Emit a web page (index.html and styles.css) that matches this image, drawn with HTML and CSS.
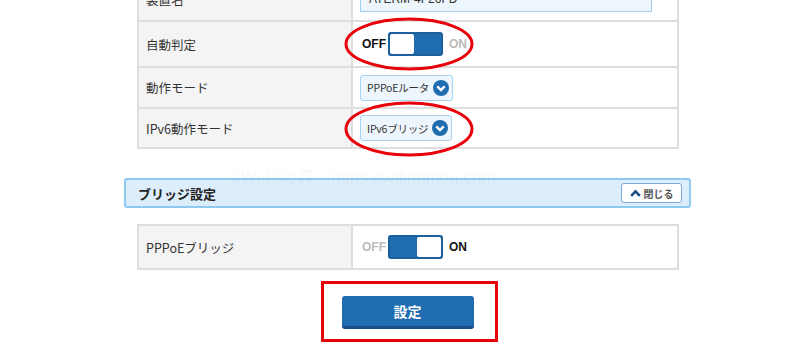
FILE: index.html
```html
<!DOCTYPE html>
<html lang="ja">
<head>
  <meta charset="UTF-8" />
  <title>ブリッジ設定</title>
  <link rel="stylesheet" href="styles.css">
</head>
<body>
<div class="page">

  <div class="settings top-table">
    <div class="row first">
      <div class="label">装置名</div>
      <div class="value"><div class="text-input">ATERM-4F26FD</div></div>
    </div>
    <div class="row tall">
      <div class="label">自動判定</div>
      <div class="value">
        <span class="sw-text on-side">OFF</span>
        <span class="switch is-off"><span class="knob"></span></span>
        <span class="sw-text dim">ON</span>
      </div>
    </div>
    <div class="row">
      <div class="label">動作モード</div>
      <div class="value">
        <div class="select">PPPoEルータ
          <svg class="chev" width="16" height="16" viewBox="0 0 16 16"><circle cx="8" cy="8" r="8" fill="#1f6cb0"/><path d="M4.3 6.3 L8 10 L11.7 6.3" fill="none" stroke="#fff" stroke-width="2.4"/></svg>
        </div>
      </div>
    </div>
    <div class="row last">
      <div class="label">IPv6動作モード</div>
      <div class="value">
        <div class="select">IPv6ブリッジ
          <svg class="chev" width="16" height="16" viewBox="0 0 16 16"><circle cx="8" cy="8" r="8" fill="#1f6cb0"/><path d="M4.3 6.3 L8 10 L11.7 6.3" fill="none" stroke="#fff" stroke-width="2.4"/></svg>
        </div>
      </div>
    </div>
  </div>

  <div class="section-head">
    <span class="section-title">ブリッジ設定</span>
    <button class="close-btn">
      <svg width="11" height="8" viewBox="0 0 11 8"><path d="M1.2 6.8 L5.5 2.3 L9.8 6.8" fill="none" stroke="#1d4f86" stroke-width="2.6"/></svg>
      閉じる
    </button>
  </div>

  <div class="settings bridge-table">
    <div class="row single">
      <div class="label">PPPoEブリッジ</div>
      <div class="value">
        <span class="sw-text dim">OFF</span>
        <span class="switch is-on"><span class="knob"></span></span>
        <span class="sw-text on-side">ON</span>
      </div>
    </div>
  </div>

  <div class="actions">
    <button class="submit">設定</button>
  </div>

  <div class="watermark">©Wi-Fiの森　https://wifinomori.com</div>

  <svg class="marks" width="800" height="350" viewBox="0 0 800 350">
    <ellipse cx="409" cy="44" rx="63" ry="25" fill="none" stroke="#e8000b" stroke-width="3"/>
    <ellipse cx="409" cy="129" rx="63" ry="26" fill="none" stroke="#e8000b" stroke-width="3"/>
  </svg>
  <div class="red-box"></div>
</div>
</body>
</html>
```

FILE: styles.css
```css
* { box-sizing: border-box; }

body {
  margin: 0;
  background: #fff;
  font-family: "Noto Sans CJK JP", "Liberation Sans", sans-serif;
  color: #333;
  overflow: hidden;
}

.page {
  position: relative;
  display: flow-root;
  width: 800px;
  height: 350px;
  padding-left: 124px;
  overflow: hidden;
}

.settings {
  width: 542px;
  margin-left: 13px;
  border: 2px solid #dedede;
  border-bottom: none;
}

.top-table {
  margin-top: -24px;
}

.row {
  display: grid;
  grid-template-columns: 214px 1fr;
  height: 41px;
  border-bottom: 2px solid #dedede;
}

.row.first { height: 44px; }
.row.tall { height: 46px; }
.row.last { height: 40px; }
.row.single { height: 44px; }

.label {
  background: #f4f4f4;
  border-right: 2px solid #dedede;
  display: flex;
  align-items: center;
  padding-left: 7px;
  font-size: 12.5px;
  color: #333;
}

.value {
  display: flex;
  align-items: center;
  padding-left: 7px;
  gap: 4px;
}

.text-input {
  width: 292px;
  height: 26px;
  background: #eef6fd;
  border: 1px solid #9fcff2;
  padding-left: 8px;
  font-size: 12px;
  line-height: 24px;
  font-family: "Liberation Sans", sans-serif;
}

.sw-text {
  font-family: "Liberation Sans", sans-serif;
  font-weight: bold;
  font-size: 12px;
  width: 22px;
  margin-left: 2px;
}

.sw-text.on-side { color: #111; }
.sw-text.dim { color: #bbb; }

.switch {
  display: flex;
  width: 55px;
  height: 24px;
  background: #1f6cb0;
  border: 2px solid #1b5f9e;
  border-radius: 3px;
}

.switch.is-on { justify-content: flex-end; }

.knob {
  width: 24px;
  height: 100%;
  background: #fff;
  border-radius: 2px;
}

.select {
  display: flex;
  align-items: center;
  gap: 4px;
  height: 26px;
  padding: 0 3px 0 6px;
  background: #eef6fd;
  border: 1px solid #a8d3f3;
  border-radius: 3px;
  font-size: 10.5px;
  letter-spacing: -0.2px;
  color: #333;
}

.section-head {
  margin-top: 29px;
  width: 567px;
  height: 30px;
  background: #dcedfb;
  border: 2px solid #8fc8f0;
  border-radius: 3px;
  display: flex;
  align-items: center;
  justify-content: space-between;
  padding: 0 7px 0 12px;
}

.section-title {
  font-weight: bold;
  font-size: 13px;
  color: #222;
}

.close-btn {
  width: 61px;
  height: 20px;
  background: #fff;
  border: 1px solid #7aa7d4;
  border-radius: 3px;
  display: flex;
  align-items: center;
  justify-content: center;
  gap: 3px;
  padding: 0;
  font-family: "Noto Sans CJK JP", sans-serif;
  font-size: 10px;
  font-weight: bold;
  color: #555;
}

.bridge-table {
  margin-top: 16px;
}

.actions {
  display: flex;
  justify-content: center;
  width: 567px;
  margin-top: 26px;
}

.submit {
  width: 132px;
  height: 33px;
  background: #1f6cb0;
  border: none;
  border-bottom: 3px solid #184f84;
  border-radius: 3px;
  color: #fff;
  font-family: "Noto Sans CJK JP", sans-serif;
  font-weight: bold;
  font-size: 14px;
  padding: 0;
}

.watermark {
  position: absolute;
  left: 228px;
  top: 163px;
  font-family: "Liberation Sans", "Noto Sans CJK JP", sans-serif;
  font-size: 17px;
  color: rgba(0, 0, 0, 0.045);
  white-space: nowrap;
}

.marks {
  position: absolute;
  left: 0;
  top: 0;
  pointer-events: none;
}

.red-box {
  position: absolute;
  left: 321px;
  top: 281px;
  width: 177px;
  height: 61px;
  border: 3px solid #e8000b;
}
```
